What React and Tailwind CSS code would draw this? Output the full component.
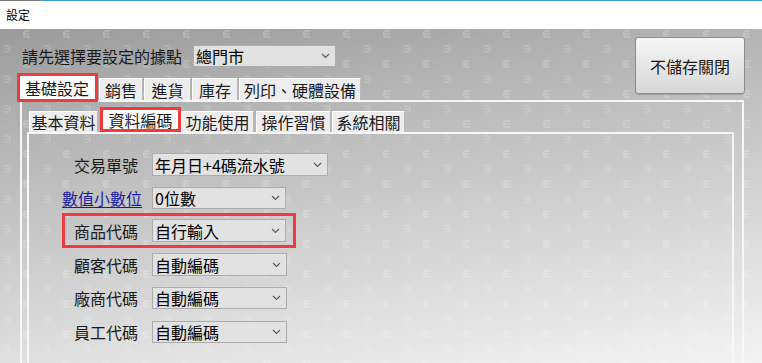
import React from "react";

const RED = "border-[#ef3b3b]";

function Chevron() {
  return (
    <svg width="9" height="6" viewBox="0 0 9 6" className="shrink-0">
      <path d="M1 1 L4.5 4.5 L8 1" fill="none" stroke="#5a5a5a" strokeWidth="1.1" />
    </svg>
  );
}

function Select({ w, h = "h-[23px]", children }) {
  return (
    <div
      className={`${w} ${h} flex items-center justify-between bg-[#e2e2e2] border border-[#acacac] pl-[2px] pr-[5px] text-[16px] leading-none text-black`}
    >
      <span className="whitespace-nowrap">{children}</span>
      <Chevron />
    </div>
  );
}

function Pattern() {
  return (
    <svg className="absolute inset-0 pointer-events-none" width="762" height="334">
      <defs>
        <pattern id="ep" x="0" y="0" width="40" height="30" patternUnits="userSpaceOnUse">
          <path
            d="M30 2 H25.5 Q24 2 24 3.5 V6.5 Q24 8 25.5 8 H30 M24 5 H29"
            fill="none"
            stroke="#ffffff"
            strokeOpacity="0.22"
            strokeWidth="1.6"
          />
          <path
            d="M4 17 H8.5 Q10 17 10 18.5 V21.5 Q10 23 8.5 23 H4 M10 20 H5"
            fill="none"
            stroke="#ffffff"
            strokeOpacity="0.16"
            strokeWidth="1.6"
          />
        </pattern>
      </defs>
      <rect width="762" height="334" fill="url(#ep)" />
    </svg>
  );
}

function OuterTab({ w, ml = "ml-[1px]", children }) {
  return (
    <div
      className={`${w} ${ml} h-[22px] flex items-center justify-center bg-[#ededed] border-t border-l border-white border-r border-r-[#b8b8b8] text-[16px] leading-none text-[#1a1a1a] whitespace-nowrap`}
    >
      {children}
    </div>
  );
}

function InnerTab({ w, ml = "ml-0", children }) {
  return (
    <div
      className={`${w} ${ml} h-[21px] flex items-center justify-center bg-[#ededed] border-t border-l border-white border-r border-r-[#b8b8b8] text-[16px] leading-none text-[#1a1a1a] whitespace-nowrap`}
    >
      {children}
    </div>
  );
}

function Row({ label, mt, selW, h, children, link }) {
  return (
    <div className={`${mt} ml-[33px] flex items-center`}>
      <div className="w-[76px] text-right text-[16px] leading-none whitespace-nowrap">
        {link ? (
          <span className="text-[#1c1ca0] underline underline-offset-2">{label}</span>
        ) : (
          <span className="text-[#1a1a1a]">{label}</span>
        )}
      </div>
      <div className="ml-[14px]">
        <Select w={selW} h={h}>
          {children}
        </Select>
      </div>
    </div>
  );
}

export default function App() {
  return (
    <div className="w-[762px] h-[363px] overflow-hidden flex flex-col bg-white font-['Noto_Sans_CJK_TC','Noto_Sans',sans-serif]">
      <div className="h-px flex shrink-0">
        <div className="w-[41px] bg-[#7a7a7a]" />
        <div className="flex-1 bg-[#3f9bd6]" />
      </div>
      <div className="h-[28px] shrink-0 flex items-center pl-[6px] text-[12px] leading-none text-black">
        設定
      </div>
      <div className="relative flex-1 min-h-0 overflow-hidden pl-[20px] pr-[17px] bg-[linear-gradient(172deg,#9b9b9b_0%,#b4b4b4_25%,#d2d2d2_60%,#f3f3f3_100%)]">
        <Pattern />
        <div className="relative flex">
          <div className="flex flex-col">
            <div className="mt-[16px] h-[22px] flex items-center">
              <span className="ml-[2px] text-[16px] leading-none text-[#1a1a1a] whitespace-nowrap">
                請先選擇要設定的據點
              </span>
              <div className="ml-[11px]">
                <Select w="w-[143px]" h="h-[22px]">總門市</Select>
              </div>
            </div>
            <div className="mt-[6px] flex items-end">
              <div
                className={`relative z-10 -ml-[3px] -mb-[2px] w-[81px] h-[29px] border-[3px] ${RED} bg-white flex items-center pl-[5px] text-[16px] leading-none text-[#1a1a1a] whitespace-nowrap`}
              >
                基礎設定
              </div>
              <OuterTab w="w-[44px]">銷售</OuterTab>
              <OuterTab w="w-[47px]">進貨</OuterTab>
              <OuterTab w="w-[46px]">庫存</OuterTab>
              <OuterTab w="w-[122px]">列印、硬體設備</OuterTab>
            </div>
          </div>
          <button className="ml-auto mt-[8px] w-[110px] h-[57px] rounded-[3px] border border-[#8c8c8c] bg-[linear-gradient(180deg,#f6f6f6_0%,#e4e4e4_60%,#d6d6d6_100%)] shadow-[0_1px_1px_rgba(0,0,0,0.15)] text-[16px] leading-none text-[#1a1a1a]">
            不儲存關閉
          </button>
        </div>

        <div className="relative mr-[1px] h-[300px] border-2 border-[#f7f7f7] pt-[5px]">
          <div className="ml-[7px] flex items-end">
            <InnerTab w="w-[69px]">基本資料</InnerTab>
            <div
              className={`relative z-10 ml-[2px] w-[81px] h-[25px] border-[3px] ${RED} bg-white flex items-center justify-center text-[16px] leading-none text-[#1a1a1a] whitespace-nowrap`}
            >
              資料編碼
            </div>
            <InnerTab w="w-[73px]">功能使用</InnerTab>
            <InnerTab w="w-[75px]" ml="ml-[2px]">操作習慣</InnerTab>
            <InnerTab w="w-[73px]" ml="ml-[1px]">系統相關</InnerTab>
          </div>
          <div className="ml-[5px] mr-[8px] h-[260px] border-2 border-[#f7f7f7] pt-[19px] flex flex-col items-start">
            <Row label="交易單號" mt="mt-0" selW="w-[176px]" h="h-[23px]">
              年月日+4碼流水號
            </Row>
            <Row label="數值小數位" mt="mt-[11px]" selW="w-[134px]" h="h-[22px]" link>
              0位數
            </Row>
            <div
              className={`mt-[4px] ml-[33px] h-[35px] border-[3px] ${RED} flex items-center pr-[7px]`}
            >
              <div className="w-[73px] text-right text-[16px] leading-none text-[#1a1a1a] whitespace-nowrap">
                商品代碼
              </div>
              <div className="ml-[14px]">
                <Select w="w-[134px]" h="h-[23px]">自行輸入</Select>
              </div>
            </div>
            <Row label="顧客代碼" mt="mt-[5px]" selW="w-[135px]" h="h-[23px]">
              自動編碼
            </Row>
            <Row label="廠商代碼" mt="mt-[11px]" selW="w-[135px]" h="h-[22px]">
              自動編碼
            </Row>
            <Row label="員工代碼" mt="mt-[12px]" selW="w-[135px]" h="h-[22px]">
              自動編碼
            </Row>
          </div>
        </div>
      </div>
    </div>
  );
}
